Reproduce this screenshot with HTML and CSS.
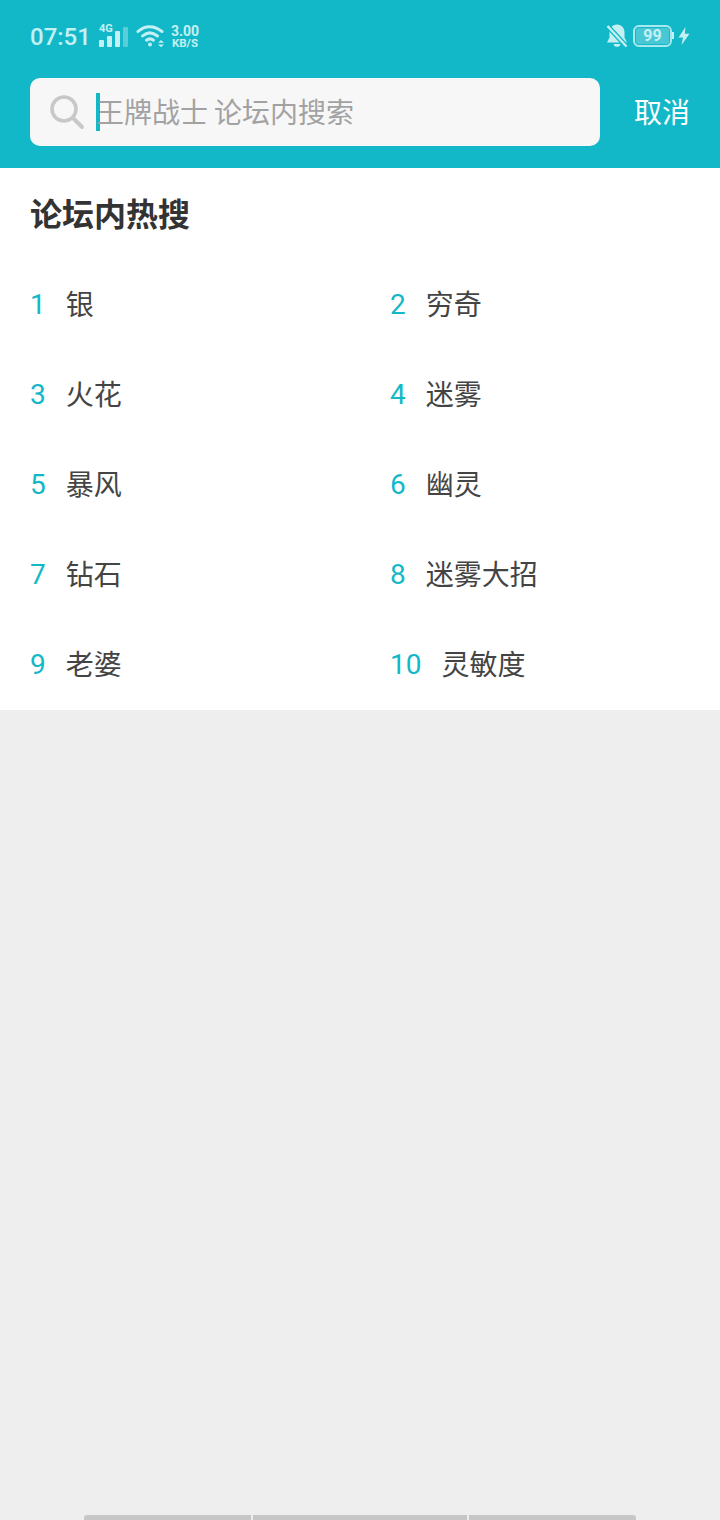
FILE: index.html
```html
<!DOCTYPE html>
<html>

<head>
    <meta name="viewport" content="width=device-width, initial-scale=1.0">
    <title>论坛内搜索</title>
    <link rel="stylesheet" href="styles.css">
</head>

<body>
    <header class="top">
        <div class="status">
            <div class="status-left">
                <span class="clock">07:51</span>
                <div class="signal">
                    <span class="net-label">4G</span>
                    <svg width="30" height="22" viewBox="0 0 30 22">
                        <rect x="0" y="14" width="5" height="7" rx="1" fill="#c4f0f4"/>
                        <rect x="8" y="10" width="5" height="11" rx="1" fill="#c4f0f4"/>
                        <rect x="16" y="5" width="5" height="16" rx="1" fill="#c4f0f4"/>
                        <rect x="24" y="1" width="5" height="20" rx="1" fill="#c4f0f4" opacity="0.4"/>
                    </svg>
                </div>
                <svg class="wifi" width="29" height="24" viewBox="0 0 29 24" fill="none" stroke="#c4f0f4" stroke-width="3" stroke-linecap="round">
                    <path d="M2 7.500C9 1 18 1 26 7.500"/>
                    <path d="M6.500 12C11 8 16.500 8 21.500 12"/>
                    <path d="M10.500 16.200C13 14.300 15 14.300 17.500 16.200"/>
                    <circle cx="14" cy="20.500" r="2" fill="#c4f0f4" stroke="none"/>
                    <path d="M22 18.800L25 16L28 18.800Z" fill="#c4f0f4" stroke="none"/>
                    <path d="M22 20.500L25 23.300L28 20.500Z" fill="#c4f0f4" stroke="none"/>
                </svg>
                <div class="speed">
                    <span class="speed-num">3.00</span>
                    <span class="speed-unit">KB/S</span>
                </div>
            </div>
            <div class="status-right">
                <svg width="22" height="26" viewBox="0 0 22 26">
                    <path d="M11 1.500C6 1.500 3.500 5.500 3.500 9.500V14.500L1 19.500H21L18.500 14.500V9.500C18.500 5.500 16 1.500 11 1.500Z" fill="#c4f0f4"/>
                    <path d="M7.500 21H14.500C14 24.800 8 24.800 7.500 21Z" fill="#c4f0f4"/>
                    <path d="M1.500 3L20.500 23.500" stroke="#13b8c8" stroke-width="5"/>
                    <path d="M1.500 3L20.500 23.500" stroke="#c4f0f4" stroke-width="2.400"/>
                </svg>
                <div class="battery">
                    <span class="battery-fill">99</span>
                </div>
                <svg width="12" height="18" viewBox="0 0 12 18">
                    <path d="M7.500 0L0.500 10.500H5L3.500 18L11.500 6.800H6.800Z" fill="#c4f0f4"/>
                </svg>
            </div>
        </div>
        <div class="search-row">
            <div class="search-box">
                <svg class="search-icon" width="36" height="36" viewBox="0 0 36 36" fill="none" stroke="#c8c8c8">
                    <circle cx="15" cy="15" r="12" stroke-width="3.600"/>
                    <path d="M24 24L33 33" stroke-width="4" stroke-linecap="round"/>
                </svg>
                <span class="caret"></span>
                <span class="placeholder">王牌战士 论坛内搜索</span>
            </div>
            <span class="cancel">取消</span>
        </div>
    </header>

    <section class="hot">
        <h2 class="hot-title">论坛内热搜</h2>
        <ul class="hot-list">
            <li><span class="rank">1</span><span class="word">银</span></li>
            <li><span class="rank">2</span><span class="word">穷奇</span></li>
            <li><span class="rank">3</span><span class="word">火花</span></li>
            <li><span class="rank">4</span><span class="word">迷雾</span></li>
            <li><span class="rank">5</span><span class="word">暴风</span></li>
            <li><span class="rank">6</span><span class="word">幽灵</span></li>
            <li><span class="rank">7</span><span class="word">钻石</span></li>
            <li><span class="rank">8</span><span class="word">迷雾大招</span></li>
            <li><span class="rank">9</span><span class="word">老婆</span></li>
            <li><span class="rank">10</span><span class="word">灵敏度</span></li>
        </ul>
    </section>

    <div class="gesture-bar">
        <span></span>
        <span></span>
        <span></span>
    </div>
</body>

</html>
```

FILE: styles.css
```css
* {
    box-sizing: border-box;
}

body {
    margin: 0;
    height: 1520px;
    overflow: hidden;
    position: relative;
    background-color: #eeeeee;
    font-family: 'Roboto', 'Noto Sans CJK SC', sans-serif;
}

/* Barre du haut */
.top {
    height: 168px;
    background-color: #13b8c8;
    padding: 0 30px;
}

.status {
    height: 78px;
    display: flex;
    justify-content: space-between;
    align-items: center;
    padding-bottom: 6px;
}

.status-left,
.status-right {
    display: flex;
    align-items: center;
}

.clock {
    font-size: 24px;
    font-weight: 500;
    color: #c4f0f4;
    margin-top: 2px;
}

.signal {
    position: relative;
    width: 30px;
    height: 24px;
    margin-left: 8px;
    display: flex;
    align-items: flex-end;
}

.net-label {
    position: absolute;
    top: -1px;
    left: 0;
    font-size: 11px;
    line-height: 11px;
    font-weight: 700;
    color: #c4f0f4;
}

.wifi {
    margin-left: 7px;
}

.speed {
    display: flex;
    flex-direction: column;
    align-items: center;
    margin-left: 6px;
    padding-top: 2px;
    color: #c4f0f4;
    font-weight: 700;
}

.speed-num {
    font-size: 14px;
    line-height: 13px;
}

.speed-unit {
    font-size: 11.500px;
    line-height: 11px;
}

.status-right {
    gap: 4px;
}

.battery {
    width: 39px;
    height: 22px;
    border: 2px solid rgba(196, 240, 244, 0.85);
    border-radius: 6px;
    padding: 1px;
    margin-left: 1px;
    margin-right: 2px;
    position: relative;
}

.battery::after {
    content: "";
    position: absolute;
    right: -4px;
    top: 5px;
    width: 2px;
    height: 7px;
    background-color: #c4f0f4;
}

.battery-fill {
    display: block;
    height: 100%;
    background-color: rgba(196, 240, 244, 0.3);
    border-radius: 2px;
    color: #c4f0f4;
    font-size: 16px;
    line-height: 16px;
    font-weight: 700;
    text-align: center;
}

/* Recherche */
.search-row {
    display: flex;
    align-items: center;
    justify-content: space-between;
}

.search-box {
    width: 570px;
    height: 68px;
    background-color: #f7f7f7;
    border-radius: 10px;
    display: flex;
    align-items: center;
    position: relative;
    padding-left: 19px;
}

.search-icon {
    flex: none;
}

.caret {
    width: 4px;
    height: 38px;
    background-color: #13b8c8;
    margin-left: 11px;
    flex: none;
}

.placeholder {
    font-size: 28px;
    line-height: 36px;
    color: #a2a2a2;
    margin-left: -4px;
    margin-top: 3px;
    word-spacing: -1px;
}

.cancel {
    font-size: 28px;
    line-height: 36px;
    color: #ffffff;
    margin-top: 3px;
}

/* Liste */
.hot {
    height: 542px;
    background-color: #ffffff;
    padding: 0 30px;
}

.hot-title {
    margin: 0;
    padding-top: 24px;
    font-size: 32px;
    line-height: 46px;
    font-weight: 700;
    color: #333333;
}

.hot-list {
    list-style: none;
    margin: 20px 0 0;
    padding: 0;
    display: grid;
    grid-template-columns: 360px 300px;
    grid-auto-rows: 90px;
}

.hot-list li {
    display: flex;
    align-items: center;
    gap: 20px;
}

.rank {
    font-size: 28px;
    color: #13b8c8;
    margin-top: 3px;
}

.word {
    font-size: 28px;
    color: #444444;
}

/* Barre de gestes */
.gesture-bar {
    position: absolute;
    left: 84px;
    bottom: 0;
    width: 552px;
    height: 5px;
    display: flex;
    gap: 2px;
}

.gesture-bar span {
    background-color: #c6c6c6;
}

.gesture-bar span:nth-child(1) {
    width: 167px;
    border-radius: 3px 0 0 0;
}

.gesture-bar span:nth-child(2) {
    width: 214px;
}

.gesture-bar span:nth-child(3) {
    width: 167px;
    border-radius: 0 3px 0 0;
}
```
